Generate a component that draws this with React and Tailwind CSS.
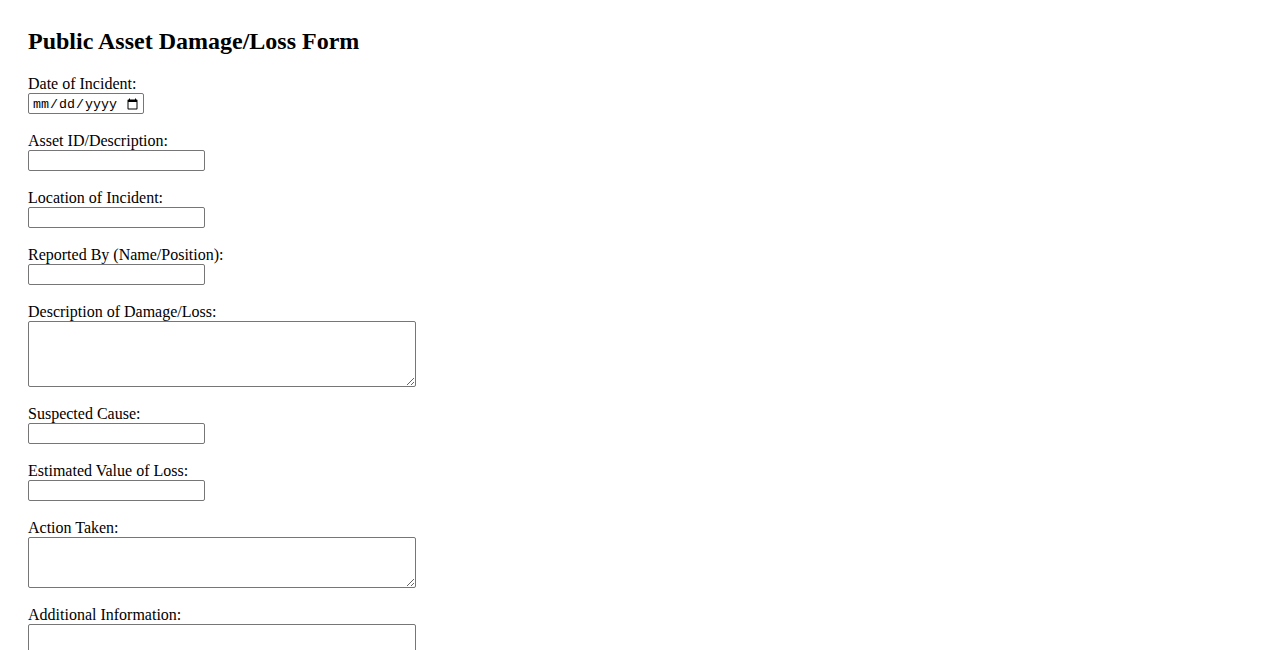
const fields = [
  { label: 'Asset ID/Description:', type: 'text' },
  { label: 'Location of Incident:', type: 'text' },
  { label: 'Reported By (Name/Position):', type: 'text' },
  { label: 'Description of Damage/Loss:', type: 'area', h: 'h-[66px]' },
  { label: 'Suspected Cause:', type: 'text' },
  { label: 'Estimated Value of Loss:', type: 'text' },
  { label: 'Action Taken:', type: 'area', h: 'h-[51px]' },
  { label: 'Additional Information:', type: 'area', h: 'h-[66px]' },
];

export default function App() {
  return (
    <div className="min-h-screen bg-white text-black font-['Liberation_Serif',serif] px-[28px] pt-[27px] pb-10">
      <h2 className="text-[24px] font-bold leading-[28px] mb-[20px]">Public Asset Damage/Loss Form</h2>

      <div className="flex flex-col gap-[18px]">
        {/* date */}
        <div className="flex flex-col">
          <label className="text-[16px] leading-[18px]">Date of Incident:</label>
          <input
            type="date"
            className="w-[116px] h-[21px] border border-[#767676] rounded-[2px] pl-[3px] pr-[2px] pt-[2px] text-[13.33px] font-['Liberation_Mono',monospace] leading-none"
          />
        </div>

        {fields.map((f) => (
          <div key={f.label} className="flex flex-col">
            <label className="text-[16px] leading-[18px]">{f.label}</label>
            {f.type === 'text' ? (
              <input type="text" className="w-[177px] h-[21px] border border-[#767676] rounded-[2px] px-[2px] text-[13px]" />
            ) : (
              <textarea className={`w-[388px] ${f.h} border border-[#767676] rounded-[2px] p-[2px] text-[13px] font-['Liberation_Mono',monospace]`} />
            )}
          </div>
        ))}
      </div>
    </div>
  );
}
